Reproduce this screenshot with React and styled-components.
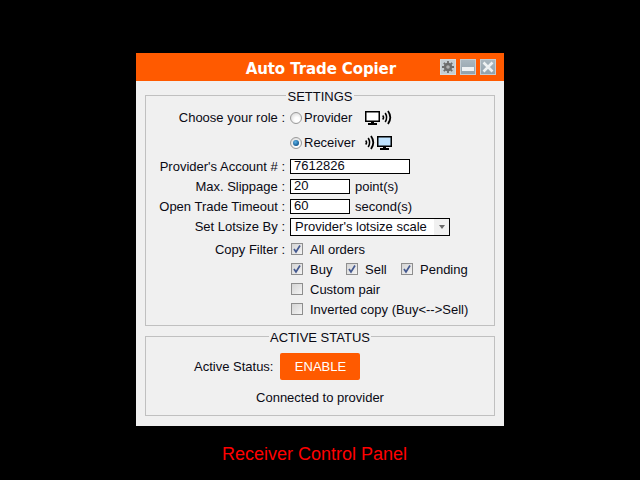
import React from "react";
import styled, { createGlobalStyle } from "styled-components";

const Global = createGlobalStyle`
  html, body { margin: 0; padding: 0; background: #000; }
  body { font-family: "Liberation Sans", Arial, sans-serif; }
`;

const Page = styled.div`
  width: 640px;
  height: 480px;
  padding-top: 53px;
  box-sizing: border-box;
  display: flex;
  flex-direction: column;
  align-items: center;
  background: #000;
  overflow: hidden;
`;

const Panel = styled.div`
  width: 368px;
  height: 373px;
  background: #f0f0f0;
  display: flex;
  flex-direction: column;
  color: #0a0a14;
  font-size: 13px;
`;

const TitleBar = styled.div`
  height: 28px;
  flex: none;
  background: #ff5a00;
  display: flex;
  align-items: center;
  justify-content: flex-end;
  padding-right: 8px;
  gap: 4px;
  box-sizing: border-box;
`;

const Title = styled.div`
  margin-right: 40px;
  color: #fff;
  font: bold 15px "DejaVu Sans", Verdana, sans-serif;
  letter-spacing: -0.1px;
  padding-top: 4px;
`;

const WinButton = styled.div`
  width: 16px;
  height: 16px;
  box-sizing: border-box;
  border: 1px solid ${(p) => (p.$light ? "#d4dade" : "#c3ccd2")};
  background: ${(p) => (p.$light ? "#c6ced3" : "linear-gradient(#a9b6bf, #92a1ac)")};
  display: flex;
  align-items: center;
  justify-content: center;
`;

const Body = styled.div`
  display: flex;
  flex-direction: column;
  gap: 3px;
  padding: 7px 9px 0;
`;

const Group = styled.fieldset`
  margin: 0;
  padding: 0;
  min-width: 0;
  border: 1px solid #c0c0c0;
  box-sizing: border-box;
  height: ${(p) => p.$h}px;
`;

const Legend = styled.legend`
  margin: 0 auto;
  padding: 2px 1px 0;
  font-size: 13px;
  line-height: 13px;
  color: #0a0a14;
`;

const Row = styled.div`
  display: grid;
  grid-template-columns: 139px 1fr;
  column-gap: 5px;
  align-items: center;
  height: ${(p) => p.$h || 20}px;
  margin-top: ${(p) => p.$mt || 0}px;
`;

const Label = styled.div`
  text-align: right;
  white-space: pre;
`;

const Values = styled.div`
  display: flex;
  align-items: center;
`;

const RadioItem = styled.div`
  display: flex;
  align-items: center;
  gap: 2px;
  width: 75px;
`;

const Radio = styled.span`
  width: 12px;
  height: 12px;
  flex: none;
  box-sizing: border-box;
  border-radius: 50%;
  border: 1px solid #9a9a9a;
  background: radial-gradient(circle at 60% 65%, #fff 25%, #cfcfcf 100%);
  display: flex;
  align-items: center;
  justify-content: center;
  &::after {
    content: "";
    display: ${(p) => (p.$on ? "block" : "none")};
    width: 6px;
    height: 6px;
    border-radius: 50%;
    background: radial-gradient(circle at 40% 35%, #5bb2e8, #0d4f86 80%);
  }
`;

const IconPair = styled.div`
  display: flex;
  align-items: center;
  gap: 2px;
`;

const TextInput = styled.div`
  width: ${(p) => p.$w}px;
  height: 15px;
  box-sizing: border-box;
  border: 1px solid #000;
  background: #fff;
  padding-left: 3px;
  line-height: 12px;
  color: #0a0a14;
`;

const Unit = styled.span`
  margin-left: 5px;
`;

const Select = styled.div`
  width: 160px;
  height: 18px;
  box-sizing: border-box;
  border: 1px solid #000;
  background: #fff;
  padding-left: 4px;
  display: flex;
  align-items: center;
  justify-content: space-between;
`;

const Arrow = styled.span`
  width: 15px;
  height: 16px;
  background: #f0f0f0;
  display: flex;
  align-items: center;
  justify-content: center;
  &::after {
    content: "";
    border: 3.5px solid transparent;
    border-top: 4px solid #6a6a6a;
    border-bottom: 0;
  }
`;

const CheckItem = styled.div`
  display: flex;
  align-items: center;
  gap: 7px;
  width: ${(p) => (p.$w ? `${p.$w}px` : "auto")};
`;

const Box = styled.span`
  width: 12px;
  height: 12px;
  flex: none;
  margin-left: 1px;
  box-sizing: border-box;
  border: 1px solid #8e8e8e;
  background: linear-gradient(135deg, #d4d4d4, #f4f4f4);
  display: flex;
  align-items: center;
  justify-content: center;
`;

const StatusRow = styled.div`
  display: flex;
  align-items: center;
  gap: 7px;
  padding-left: 48px;
  margin-top: 9px;
`;

const Enable = styled.div`
  width: 80px;
  height: 27px;
  background: #ff5a00;
  border-radius: 2px;
  color: #fff;
  font-size: 13px;
  display: flex;
  align-items: center;
  justify-content: center;
`;

const Connected = styled.div`
  text-align: center;
  margin-top: 11px;
  line-height: 14px;
`;

const Caption = styled.div`
  margin-top: 17px;
  margin-right: 11px;
  color: #f00;
  font-size: 18px;
  line-height: 22px;
`;

const Check = () => (
  <svg width="10" height="10" viewBox="0 0 10 10">
    <path d="M2 5 L4 8 L8 1.5" fill="none" stroke="#44598f" strokeWidth="1.7" />
  </svg>
);

const Monitor = ({ fill }) => (
  <svg width="15" height="14" viewBox="0 0 15 14">
    <rect x="0.75" y="0.75" width="13.5" height="9.5" fill={fill} stroke="#000" strokeWidth="1.5" />
    <rect x="6" y="10" width="3" height="2" fill="#000" />
    <rect x="3" y="12" width="9" height="2" fill="#000" />
  </svg>
);

const Waves = () => (
  <svg width="10" height="15" viewBox="0 0 10 15" fill="none" stroke="#000">
    <path d="M0.7 5.5 Q2.4 7.5 0.7 9.5" strokeWidth="1.5" />
    <path d="M3.2 3 Q6 7.5 3.2 12" strokeWidth="1.6" />
    <path d="M6 1 Q10.6 7.5 6 14" strokeWidth="1.8" />
  </svg>
);

const Gear = () => (
  <svg width="12" height="12" viewBox="0 0 12 12">
    <circle cx="6" cy="6" r="3" fill="none" stroke="#6d6d6d" strokeWidth="2.4" />
    <path d="M6 0v12M0 6h12M1.8 1.8l8.4 8.4M10.2 1.8l-8.4 8.4" stroke="#6d6d6d" strokeWidth="1.8" />
    <circle cx="6" cy="6" r="1.8" fill="#b0b0b0" />
  </svg>
);

const Minus = () => (
  <svg width="12" height="12" viewBox="0 0 12 12">
    <rect x="0" y="6" width="12" height="4" fill="#eef1f3" />
  </svg>
);

const Cross = () => (
  <svg width="12" height="12" viewBox="0 0 12 12">
    <path d="M1.5 1.5 L10.5 10.5 M10.5 1.5 L1.5 10.5" stroke="#eef1f3" strokeWidth="2.6" />
  </svg>
);

const CheckField = ({ on, w, children }) => (
  <CheckItem $w={w}>
    <Box>{on && <Check />}</Box>
    {children}
  </CheckItem>
);

export default function App() {
  return (
    <Page>
      <Global />
      <Panel>
        <TitleBar>
          <Title>Auto Trade Copier</Title>
          <WinButton $light><Gear /></WinButton>
          <WinButton><Minus /></WinButton>
          <WinButton><Cross /></WinButton>
        </TitleBar>
        <Body>
          <Group $h={238}>
            <Legend>SETTINGS</Legend>
            <Row $h={25} $mt={2}>
              <Label>Choose your role :</Label>
              <Values>
                <RadioItem><Radio />Provider</RadioItem>
                <IconPair><Monitor fill="#fff" /><Waves /></IconPair>
              </Values>
            </Row>
            <Row $h={25}>
              <Label />
              <Values>
                <RadioItem><Radio $on />Receiver</RadioItem>
                <IconPair><Waves /><Monitor fill="#bfe3ff" /></IconPair>
              </Values>
            </Row>
            <Row $mt={1}>
              <Label>Provider's Account # :</Label>
              <Values><TextInput $w={120}>7612826</TextInput></Values>
            </Row>
            <Row>
              <Label>Max. Slippage :</Label>
              <Values><TextInput $w={60}>20</TextInput><Unit>point(s)</Unit></Values>
            </Row>
            <Row>
              <Label>Open Trade Timeout :</Label>
              <Values><TextInput $w={60}>60</TextInput><Unit>second(s)</Unit></Values>
            </Row>
            <Row $h={21}>
              <Label>Set Lotsize By :</Label>
              <Values>
                <Select>Provider's lotsize scale<Arrow /></Select>
              </Values>
            </Row>
            <Row $mt={2}>
              <Label>Copy Filter :</Label>
              <Values><CheckField on>All orders</CheckField></Values>
            </Row>
            <Row>
              <Label />
              <Values>
                <CheckField on w={55}>Buy</CheckField>
                <CheckField on w={55}>Sell</CheckField>
                <CheckField on>Pending</CheckField>
              </Values>
            </Row>
            <Row>
              <Label />
              <Values><CheckField>Custom pair</CheckField></Values>
            </Row>
            <Row>
              <Label />
              <Values><CheckField>Inverted copy (Buy&lt;--&gt;Sell)</CheckField></Values>
            </Row>
          </Group>
          <Group $h={87}>
            <Legend>ACTIVE STATUS</Legend>
            <StatusRow>
              <span>Active Status:</span>
              <Enable>ENABLE</Enable>
            </StatusRow>
            <Connected>Connected to provider</Connected>
          </Group>
        </Body>
      </Panel>
      <Caption>Receiver Control Panel</Caption>
    </Page>
  );
}
